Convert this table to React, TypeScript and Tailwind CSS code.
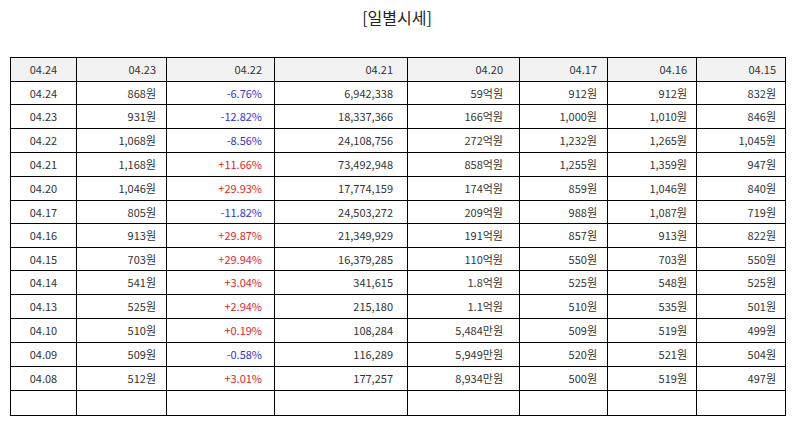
const header = ['04.24', '04.23', '04.22', '04.21', '04.20', '04.17', '04.16', '04.15'];

type Row = [string, string, string, string, string, string, string, string];

const rows: Row[] = [
  ['04.24', '868원', '-6.76%', '6,942,338', '59억원', '912원', '912원', '832원'],
  ['04.23', '931원', '-12.82%', '18,337,366', '166억원', '1,000원', '1,010원', '846원'],
  ['04.22', '1,068원', '-8.56%', '24,108,756', '272억원', '1,232원', '1,265원', '1,045원'],
  ['04.21', '1,168원', '+11.66%', '73,492,948', '858억원', '1,255원', '1,359원', '947원'],
  ['04.20', '1,046원', '+29.93%', '17,774,159', '174억원', '859원', '1,046원', '840원'],
  ['04.17', '805원', '-11.82%', '24,503,272', '209억원', '988원', '1,087원', '719원'],
  ['04.16', '913원', '+29.87%', '21,349,929', '191억원', '857원', '913원', '822원'],
  ['04.15', '703원', '+29.94%', '16,379,285', '110억원', '550원', '703원', '550원'],
  ['04.14', '541원', '+3.04%', '341,615', '1.8억원', '525원', '548원', '525원'],
  ['04.13', '525원', '+2.94%', '215,180', '1.1억원', '510원', '535원', '501원'],
  ['04.10', '510원', '+0.19%', '108,284', '5,484만원', '509원', '519원', '499원'],
  ['04.09', '509원', '-0.58%', '116,289', '5,949만원', '520원', '521원', '504원'],
  ['04.08', '512원', '+3.01%', '177,257', '8,934만원', '500원', '519원', '497원'],
  ['', '', '', '', '', '', '', ''],
];

// row heights measured line to line in the screenshot (header first)
const rowH = [
  'h-[24px]', 'h-[23px]', 'h-[24px]', 'h-[24px]', 'h-[24px]', 'h-[24px]', 'h-[23px]', 'h-[24px]',
  'h-[23px]', 'h-[24px]', 'h-[24px]', 'h-[24px]', 'h-[24px]', 'h-[24px]', 'h-[25px]',
];

// column widths and right padding, read off the screenshot
const cols = [
  { w: 'w-[66px]', cls: 'text-center' },
  { w: 'w-[90px]', cls: 'text-right pr-[10px]' },
  { w: 'w-[108px]', cls: 'text-right pr-[12px]' },
  { w: 'w-[133px]', cls: 'text-right pr-[14px]' },
  { w: 'w-[112px]', cls: 'text-right pr-[16px]' },
  { w: 'w-[88px]', cls: 'text-right pr-[10px]' },
  { w: 'w-[89px]', cls: 'text-right pr-[9px]' },
  { w: 'w-[89px]', cls: 'text-right pr-[9px]' },
];

const rateColor = (v: string) => {
  if (v.startsWith('+')) return 'text-[#e0282a]';
  if (v.startsWith('-')) return 'text-[#3434cc]';
  return 'text-[#333]';
};

export default function App() {
  return (
    <div className="w-[794px] h-[425px] bg-white font-['Noto_Sans_CJK_KR','Noto_Sans',sans-serif] text-[#333]">
      <h2 className="pt-[5px] h-[57px] text-center text-[16px] leading-[24px] text-[#222]">[일별시세]</h2>
      <div className="px-[10px]">
        <table className="w-[775px] border-collapse table-fixed text-[11px] leading-none">
          <colgroup>
            {cols.map((c, i) => (
              <col key={i} className={c.w} />
            ))}
          </colgroup>
          <thead>
            <tr className={`bg-[#f2f2f2] ${rowH[0]}`}>
              {header.map((h, i) => (
                <th key={i} className={`border border-black p-0 font-normal ${cols[i].cls}`}>
                  {h}
                </th>
              ))}
            </tr>
          </thead>
          <tbody>
            {rows.map((r, ri) => (
              <tr key={ri} className={rowH[ri + 1]}>
                {r.map((v, ci) => (
                  <td
                    key={ci}
                    className={`border border-black py-0 ${cols[ci].cls} ${ci === 2 ? rateColor(v) : ''}`}
                  >
                    {v}
                  </td>
                ))}
              </tr>
            ))}
          </tbody>
        </table>
      </div>
    </div>
  );
}
